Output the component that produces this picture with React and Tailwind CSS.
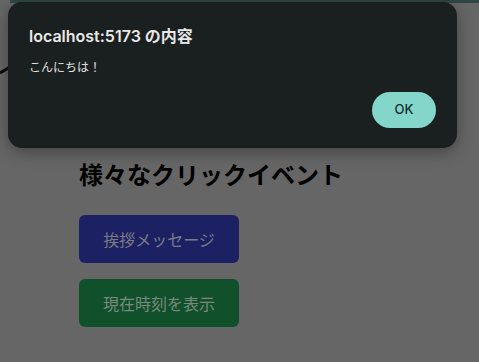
import React from 'react';

const cjk = { fontFamily: '"Noto Sans CJK JP", sans-serif' };
const ui = { fontFamily: 'Inter, "Noto Sans CJK JP", sans-serif' };

export default function App() {
  return (
    <div className="relative w-full h-[362px] overflow-hidden bg-[#666666]" style={cjk}>
      {/* page behind the dimmed overlay */}
      <div className="ml-[10px] h-[3px] bg-[#2f4744]" />
      <div className="pl-[79px] pt-[155px]">
        <h1 className="text-[24px] leading-[32px] font-bold text-black">様々なクリックイベント</h1>
        <div className="mt-[25px] flex flex-col items-start gap-4">
          <button className="w-[160px] h-[48px] rounded-md bg-[#1c2163] text-[16px] text-[#7c7c86]">
            挨拶メッセージ
          </button>
          <button className="w-[160px] h-[48px] rounded-md bg-[#10502a] text-[16px] text-[#7a8a80]">
            現在時刻を表示
          </button>
        </div>
      </div>

      {/* bit of a drawing peeking out from behind the dialog */}
      <svg className="absolute left-0 top-[60px]" width="12" height="20" viewBox="0 0 12 20">
        <line x1="0" y1="13" x2="10" y2="7" stroke="#0d0d0d" strokeWidth="3" />
      </svg>

      {/* alert dialog */}
      <div
        className="absolute left-[8px] top-[2px] w-[449px] h-[146px] rounded-[14px] bg-[#1a1f1f] shadow-[0_4px_16px_rgba(0,0,0,0.35)] pl-[21px] pr-[21px] pt-[23px]"
        style={ui}
      >
        <div className="text-[16px] leading-[22px] font-semibold text-[#e8e8e8]">localhost:5173 の内容</div>
        <div className="mt-[12px] text-[12px] leading-[16px] text-[#e0e0e0]" style={cjk}>こんにちは！</div>
        <div className="mt-[17px] flex justify-end">
          <button className="w-[64px] h-[36px] rounded-full bg-[#84d6cb] text-[13px] font-medium text-[#13302c]">
            OK
          </button>
        </div>
      </div>
    </div>
  );
}
